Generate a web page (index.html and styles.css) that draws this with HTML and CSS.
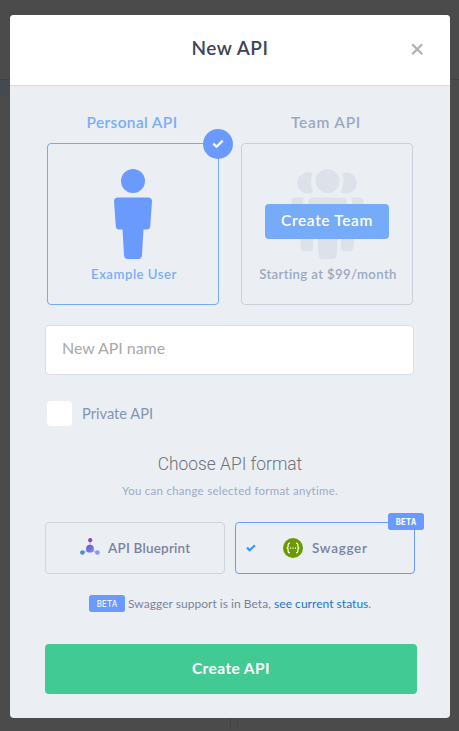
FILE: index.html
```html
<!DOCTYPE html>
<html lang="en">
<head>
<meta charset="utf-8">
<title>New API</title>
<link rel="stylesheet" href="styles.css">
</head>
<body>
<div class="backdrop"><i class="page-line"></i><i class="page-band"></i><i class="page-gap"></i></div>
<main class="modal">
  <header class="modal-header">
    <h1><span class="t-title">New API</span></h1>
    <button class="close" aria-label="Close"><svg width="14" height="14" viewBox="0 0 14 14"><path d="M2.200 2.200l10 10M12.200 2.200l-10 10" stroke="#b1b1b1" stroke-width="2.300" fill="none"/></svg></button>
  </header>
  <div class="modal-body">
    <section class="owners">
      <div class="owner selected">
        <h2><span class="t-personal">Personal API</span></h2>
        <div class="owner-card">
          <span class="tick"><svg width="30" height="30" viewBox="0 0 30 30"><path d="M10.300 14.600l3.200 3.200 6.200-6.200" stroke="#fff" stroke-width="2.200" fill="none"/></svg></span>
          <svg class="figure" width="80" height="92" viewBox="0 0 80 92" fill="#6b9aff">
            <circle cx="40" cy="13" r="12"/>
            <path d="M25 29.500h30q4 0 4 4l-1.800 25q-.3 3-3.200 3h-3.500l-1.500 25.500q-.3 4-3.500 4h-11q-3.200 0-3.500-4l-1.500-25.500h-3.500q-2.900 0-3.200-3l-1.800-25q0-4 4-4z"/>
          </svg>
          <p><span class="t-user">Example User</span></p>
        </div>
      </div>
      <div class="owner">
        <h2><span class="t-team">Team API</span></h2>
        <div class="owner-card">
          <svg class="figure" width="80" height="92" viewBox="0 0 80 92" fill="#dde1ea">
            <circle cx="40.500" cy="13" r="12"/>
            <path d="M25.500 5Q19 3 14.500 6.500A10.500 10.500 0 0 0 21 25.500q3 0 5-1.300Q22.500 15 25.500 5z"/>
            <path d="M55.500 5Q61 3 65.500 6.500A10.500 10.500 0 0 1 59 25.500q-3 0-5-1.300Q58 15 55.500 5z"/>
            <path d="M25.500 29.500h30q4 0 4 4l-1.800 25q-.3 3-3.200 3h-3.500l-1.500 25.500q-.3 4-3.500 4h-11q-3.200 0-3.500-4l-1.500-25.500h-3.500q-2.900 0-3.200-3l-1.800-25q0-4 4-4z"/>
            <path d="M8 29.500h9.500q-1.500 2-1.500 5l2 25q1 4 8 5V80q0 3-3 3h-6q-3 0-3.300-3L13 60H9.500q-2.500 0-2.800-3L4.500 33q0-3.500 3.500-3.500zM73 29.500h-9.500q1.500 2 1.500 5l-2 25q-1 4-9 5V80q0 3 3 3h6q3 0 3.300-3L68 60h3.500q2.500 0 2.800-3l2.200-24q0-3.500-3.500-3.500z"/>
          </svg>
          <button class="create-team"><span class="t-ct">Create Team</span></button>
          <p><span class="t-price">Starting at $99/month</span></p>
        </div>
      </div>
    </section>
    <div class="name-field"><span class="t-name">New API name</span></div>
    <label class="private"><span class="checkbox"></span><span class="t-private">Private API</span></label>
    <h3><span class="t-choose">Choose API format</span></h3>
    <p class="hint"><span class="t-hint">You can change selected format anytime.</span></p>
    <section class="formats">
      <div class="format">
        <svg class="bp" width="20" height="20" viewBox="0 0 20 20">
          <defs><linearGradient id="hub" x2="1" y2="1"><stop stop-color="#8050dc"/><stop offset=".5" stop-color="#6672ea"/><stop offset="1" stop-color="#7f91fc"/></linearGradient></defs>
          <path d="M10 2v9M10 11l-7.500 4M10 11l7.500 4" stroke="#b0b4ed" stroke-width="1.200"/>
          <circle cx="10" cy="10.700" r="3.900" fill="url(#hub)"/><circle cx="10.200" cy="2.200" r="2.100" fill="#8548c8"/><circle cx="2.400" cy="14.500" r="2.300" fill="#4a91c5"/><circle cx="17.400" cy="14.500" r="2.300" fill="#8793fb"/>
        </svg>
        <span class="t-bp">API Blueprint</span>
      </div>
      <div class="format selected">
        <svg class="mini-tick" width="10" height="8" viewBox="0 0 10 8"><path d="M1 3.600l2.700 2.700L9 1.200" stroke="#3895ff" stroke-width="2.200" fill="none"/></svg>
        <svg class="sw" width="20" height="20" viewBox="0 0 20 20"><circle cx="10" cy="10" r="10" fill="#6a9a00"/><path d="M7 5.200q-1.900 0-1.900 1.600v1.600q0 1.600-1.500 1.600 1.500 0 1.500 1.600v1.600q0 1.600 1.900 1.600M13 5.200q1.900 0 1.900 1.600v1.600q0 1.600 1.500 1.600-1.500 0-1.500 1.600v1.600q0 1.600-1.900 1.600" fill="none" stroke="#fff" stroke-width="1.200"/><path d="M6.900 9.500h1.200v1.200H6.900zM9.400 9.500h1.200v1.200H9.400zM11.900 9.500h1.200v1.200h-1.200z" fill="#fff"/></svg>
        <span class="t-sw">Swagger</span>
        <span class="beta corner"><b>BETA</b></span>
      </div>
    </section>
    <p class="support"><span class="beta">BETA</span><span class="t-support">Swagger support is in Beta, <a>see current status</a>.</span></p>
    <button class="submit"><span class="t-submit">Create API</span></button>
  </div>
</main>
</body>
</html>
```
FILE: styles.css
```css
* { box-sizing: border-box; margin: 0; padding: 0; }
body { height: 731px; overflow: hidden; padding: 15px 9px 13px 10px; font-family: Lato, "Open Sans", sans-serif; background: #4b4b4b; }
button { border: 0; font-family: inherit; background: none; }
h1, h2, h3 { font-weight: 600; }
span { white-space: nowrap; }

.backdrop { position: absolute; inset: 0; overflow: hidden; }
.page-line { position: absolute; top: 79px; left: 0; right: 0; height: 1px; background: #414141; }
.page-band { position: absolute; top: 80px; left: 0; width: 10px; height: 17px; background: #444a50; }
.page-gap { position: absolute; top: 700px; left: 230px; width: 8px; height: 30px; border: solid #434343; border-width: 0 1px; }

.modal { position: relative; height: 703px; border-radius: 4px; background: #ebeff4; overflow: hidden; }
.modal-header { height: 71px; display: flex; align-items: center; justify-content: center; background: #fff; border-bottom: 1px solid #d7dce4; padding-bottom: 4px; }
.modal-header h1 { font-size: 19px; line-height: 24px; color: #3d4457; }
.close { position: absolute; right: 26px; top: 27px; width: 14px; height: 14px; }
.close svg { display: block; }

.modal-body { padding: 25px 33px 24px 35px; }
.owners { display: flex; gap: 22px; padding: 0 2px; }
.owner { width: 172px; color: #9ba8bf; text-align: center; }
.owner h2 { font-size: 15.5px; line-height: 22px; height: 32px; padding-right: 2px; }
.owner-card { position: relative; height: 162px; padding-top: 24px; border: 1px solid #c9cfdb; border-radius: 4px; }
.owner-card p { font-size: 13.2px; font-weight: 600; line-height: 18px; margin-top: 5px; padding-left: 2px; }
.figure { display: block; margin: 0 auto; }
.owner.selected { color: #7aaef7; }
.selected .owner-card { border-color: #74a9fa; }
.tick { position: absolute; top: -15px; right: -15px; width: 30px; height: 30px; border-radius: 50%; background: #6b9aff; }
.tick svg { display: block; }
.create-team { position: absolute; top: 60px; left: 23px; width: 124px; height: 35px; padding-bottom: 4px; border-radius: 4px; background: #76abf9; color: #fff; font-size: 15.5px; font-weight: 600; line-height: 20px; }

.name-field { width: 369px; height: 50px; margin-top: 20px; padding: 12px 16px; border: 1px solid #d8deea; border-radius: 4px; background: #fff; color: #a9a9a9; font-size: 16px; line-height: 20px; }
.private { display: flex; align-items: center; gap: 10px; height: 25px; margin: 26px 0 0 2px; color: #8494b0; font-size: 14.7px; line-height: 20px; }
.checkbox { width: 25px; height: 25px; border-radius: 4px; background: #fff; }
h3 { margin-top: 25px; padding-right: 2px; text-align: center; font-family: Roboto, sans-serif; font-weight: 300; font-size: 19px; line-height: 26px; color: #6e727b; }
.hint { margin-top: 5px; padding-right: 2px; text-align: center; font-size: 11.5px; line-height: 18px; color: #9daac5; }
.formats { display: flex; gap: 10px; margin-top: 22px; }
.format { position: relative; width: 180px; height: 52px; border: 1px solid #d0d5dc; border-radius: 4px; display: flex; align-items: center; padding-left: 34px; gap: 8px; font-size: 13.5px; font-weight: 600; line-height: 18px; color: #79829d; }
.format.selected { padding-left: 10px; border-color: #6b9aff; }
.sw { margin-left: 19px; }
.beta { flex: none; width: 36px; height: 17px; border-radius: 2.500px; background: #6b9aff; color: #fff; font: 8.500px/18px "DejaVu Sans Mono", monospace; text-align: center; }
.beta b { font-weight: 700; }
.corner { position: absolute; top: -10px; right: -10px; }
.support { display: flex; align-items: center; gap: 3px; height: 17px; margin: 21px 0 32px 44px; font-size: 12px; line-height: 17px; color: #79829d; }
.support a { color: #1c75cf; }
.submit { display: block; width: 372px; height: 50px; padding-bottom: 3px; border-radius: 4px; background: #41ca94; color: #fff; font-size: 15.5px; font-weight: 700; line-height: 20px; }

.t-title { letter-spacing: .55px; }
.t-personal { letter-spacing: .35px; }
.t-team { letter-spacing: .75px; }
.t-user { letter-spacing: .5px; }
.t-price { letter-spacing: .36px; }
.t-ct { letter-spacing: .62px; }
.t-name { letter-spacing: -.05px; }
.t-private { letter-spacing: -.02px; padding-bottom: 2px; }
.t-choose { display: inline-block; transform: scaleX(.915); }
.t-hint { letter-spacing: .26px; }
.t-bp { letter-spacing: .2px; }
.t-sw { letter-spacing: .7px; margin-left: 1px; }
.t-support { padding-bottom: 1px; letter-spacing: .03px; }
.t-submit { letter-spacing: .4px; }
```
